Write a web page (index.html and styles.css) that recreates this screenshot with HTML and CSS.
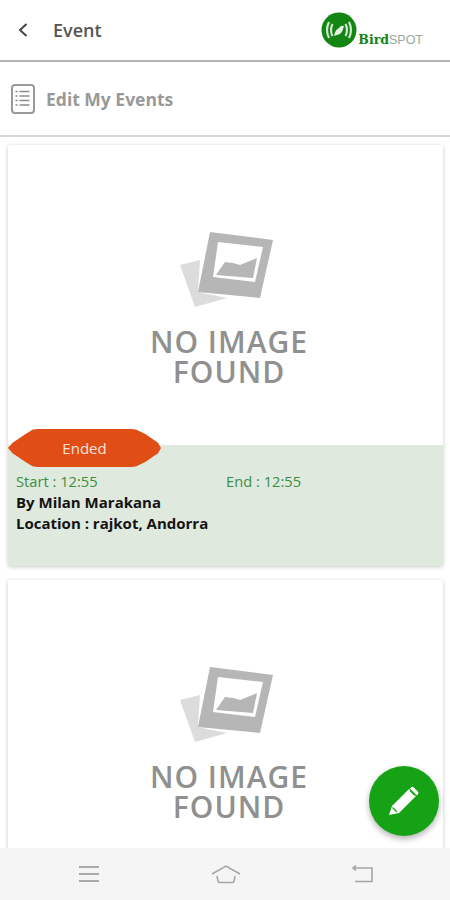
FILE: index.html
```html
<!DOCTYPE html>
<html lang="en">
<head>
  <meta charset="UTF-8">
  <meta name="viewport" content="width=device-width, initial-scale=1.0">
  <title>Event</title>
  <link rel="stylesheet" href="styles.css">
</head>
<body>
  <div class="app">
    <header class="topbar">
      <svg class="back-icon" width="12" height="16" viewBox="0 0 12 16"><path d="M9.500 2 3 8l6.500 6" fill="none" stroke="#444" stroke-width="2"/></svg>
      <span class="topbar-title">Event</span>
      <div class="logo">
        <svg width="36" height="36" viewBox="0 0 36 36">
          <circle cx="18" cy="18" r="17.500" fill="#128512"/>
          <path d="M8 10q-4 8 0 16M11.500 12q-3 6 0 12M28 10q4 8 0 16M24.500 12q3 6 0 12" fill="none" stroke="#cfe5cf" stroke-width="2.200"/>
          <path d="M13 24q1-6 5-8 2-3 5-2l-1 3q-1 5-6 6z" fill="#e8f3e8"/>
        </svg>
        <span class="logo-text"><b>Bird</b>SPOT</span>
      </div>
    </header>

    <div class="subbar">
      <svg width="24" height="30" viewBox="0 0 24 30">
        <rect x="1" y="1" width="22" height="28" rx="3" fill="#fff" stroke="#9a9a9a" stroke-width="2"/>
        <path d="M8.500 7.500h10M8.500 12h10M8.500 16.500h10M8.500 21h10" stroke="#8c8c8c" stroke-width="1.600"/>
        <path d="M4.500 7.500h2M4.500 12h2M4.500 16.500h2M4.500 21h2" stroke="#8c8c8c" stroke-width="1.600"/>
      </svg>
      <span class="subbar-title">Edit My Events</span>
    </div>

    <main class="list">
      <article class="card">
        <div class="no-image">
          <svg width="100" height="80" viewBox="0 0 100 80">
            <path d="M2 35 22 30 20 62 49 68 17 77z" fill="#dcdcdc"/>
            <path d="M32 2 95 10 82 68 20 62z" fill="#b6b6b6"/>
            <path d="M40 12 85 17 77 52 35 47z" fill="#fff"/>
            <path d="M38 45 47 32 55 33 62 35 79 28 75 48z" fill="#b6b6b6"/>
          </svg>
          <p class="no-image-text"><span>NO IMAGE</span><span>FOUND</span></p>
        </div>
        <span class="badge">Ended</span>
        <div class="card-info">
          <div class="times"><span>Start : 12:55</span><span>End : 12:55</span></div>
          <p>By Milan Marakana</p>
          <p>Location : rajkot, Andorra</p>
        </div>
      </article>

      <article class="card">
        <div class="no-image">
          <svg width="100" height="80" viewBox="0 0 100 80">
            <path d="M2 35 22 30 20 62 49 68 17 77z" fill="#dcdcdc"/>
            <path d="M32 2 95 10 82 68 20 62z" fill="#b6b6b6"/>
            <path d="M40 12 85 17 77 52 35 47z" fill="#fff"/>
            <path d="M38 45 47 32 55 33 62 35 79 28 75 48z" fill="#b6b6b6"/>
          </svg>
          <p class="no-image-text"><span>NO IMAGE</span><span>FOUND</span></p>
        </div>
      </article>
    </main>

    <button class="fab" type="button" aria-label="Edit">
      <svg width="32" height="32" viewBox="0 0 32 32">
        <path d="M1 30 4 21 21 4l7 7-17 17z" fill="#fff"/>
        <path d="M23 2.500a2 2 0 0 1 2.800 0l4 4a2 2 0 0 1 0 2.800L29 10.500 22 3.500z" fill="#fff"/>
        <path d="M4.500 22.500 9 27" stroke="#15a215" stroke-width="1.200"/>
        <path d="M22 5.500 27 10.500" stroke="#15a215" stroke-width="1.200"/>
      </svg>
    </button>

    <nav class="bottombar">
      <svg width="22" height="18" viewBox="0 0 22 18"><path d="M1 2h20M1 9h20M1 16h20" stroke="#aaa" stroke-width="2"/></svg>
      <svg width="30" height="20" viewBox="0 0 30 20"><path d="M1 10 15 2l14 8M6 12l1 5q0 1.500 1.500 1.500h13q1.500 0 1.500-1.500l1-5" fill="none" stroke="#a5a5a5" stroke-width="1.500"/></svg>
      <svg width="22" height="18" viewBox="0 0 22 18"><path d="M2 3h19v13.500H4M5 .5 2 3l3 2.500" fill="none" stroke="#a5a5a5" stroke-width="1.600"/></svg>
    </nav>
  </div>
</body>
</html>
```

FILE: styles.css
```css
body {
  margin: 0;
  font-family: "Open Sans", sans-serif;
  background-color: #fff;
}
p {
  margin: 0;
}
.app {
  position: relative;
  display: flex;
  flex-direction: column;
  height: 900px;
  overflow: hidden;
}
.topbar {
  display: flex;
  align-items: center;
  height: 60px;
  padding: 0 27px 0 17px;
  border-bottom: 2px solid #b4b4b4;
  flex-shrink: 0;
}
.back-icon {
  margin-right: 24px;
}
.topbar-title {
  font-size: 18px;
  font-weight: 600;
  color: #555;
}
.logo {
  display: flex;
  align-items: flex-end;
  margin-left: auto;
  height: 36px;
}
.logo-text {
  margin-left: 1px;
  margin-bottom: 1px;
  font-family: "Liberation Sans", sans-serif;
  font-size: 12.500px;
  color: #9aa89a;
}
.logo-text b {
  font-family: "DejaVu Serif", serif;
  font-size: 12.500px;
  color: #128512;
}
.subbar {
  display: flex;
  align-items: center;
  gap: 11px;
  height: 73px;
  padding-left: 11px;
  border-bottom: 2px solid #d6d6d6;
  flex-shrink: 0;
}
.subbar-title {
  font-size: 17.500px;
  font-weight: 700;
  color: #999;
}
.list {
  display: flex;
  flex-direction: column;
  gap: 14px;
  flex: 1;
  min-height: 0;
  padding: 8px 7px 0 8px;
}
.card {
  position: relative;
  flex-shrink: 0;
  background-color: #fff;
  box-shadow: 0 1px 4px rgba(0, 0, 0, 0.22);
  border-radius: 2px;
}
.no-image {
  display: flex;
  flex-direction: column;
  align-items: center;
  height: 300px;
  padding-top: 85px;
  box-sizing: border-box;
}
.no-image svg {
  margin-left: 5px;
}
.no-image-text {
  margin: 17px 0 0 7px;
  font-size: 30px;
  line-height: 30px;
  font-weight: 600;
  letter-spacing: 1px;
  text-align: center;
  color: #909090;
}
.no-image-text span {
  display: block;
  height: 30px;
}
.badge {
  position: absolute;
  left: 0;
  top: 284px;
  width: 153px;
  height: 38px;
  line-height: 38px;
  text-align: center;
  font-size: 15px;
  color: #f4e3dc;
  background-color: #e04e16;
  clip-path: polygon(0 50%, 3% 36%, 12% 12%, 16% 2%, 19% 0, 81% 0, 84% 2%, 90% 14%, 98% 36%, 100% 50%, 98% 64%, 90% 86%, 84% 98%, 81% 100%, 19% 100%, 16% 98%, 12% 88%, 3% 64%);
}
.card-info {
  height: 121px;
  padding: 26px 8px 0;
  box-sizing: border-box;
  background-color: #dfe9dd;
  font-size: 15px;
  line-height: 21px;
  font-weight: 700;
  color: #141414;
}
.times {
  display: grid;
  grid-template-columns: 210px 1fr;
  font-size: 14.700px;
  font-weight: 400;
  color: #3a8f45;
}
.fab {
  position: absolute;
  left: 369px;
  top: 766px;
  display: flex;
  align-items: center;
  justify-content: center;
  width: 70px;
  height: 70px;
  padding: 0;
  border: none;
  border-radius: 50%;
  background-color: #15a215;
  box-shadow: 0 3px 6px rgba(0, 0, 0, 0.3);
}
.bottombar {
  display: flex;
  align-items: center;
  justify-content: space-between;
  height: 52px;
  padding: 0 77px 0 78px;
  background-color: #f5f5f5;
  flex-shrink: 0;
  position: relative;
}
```
